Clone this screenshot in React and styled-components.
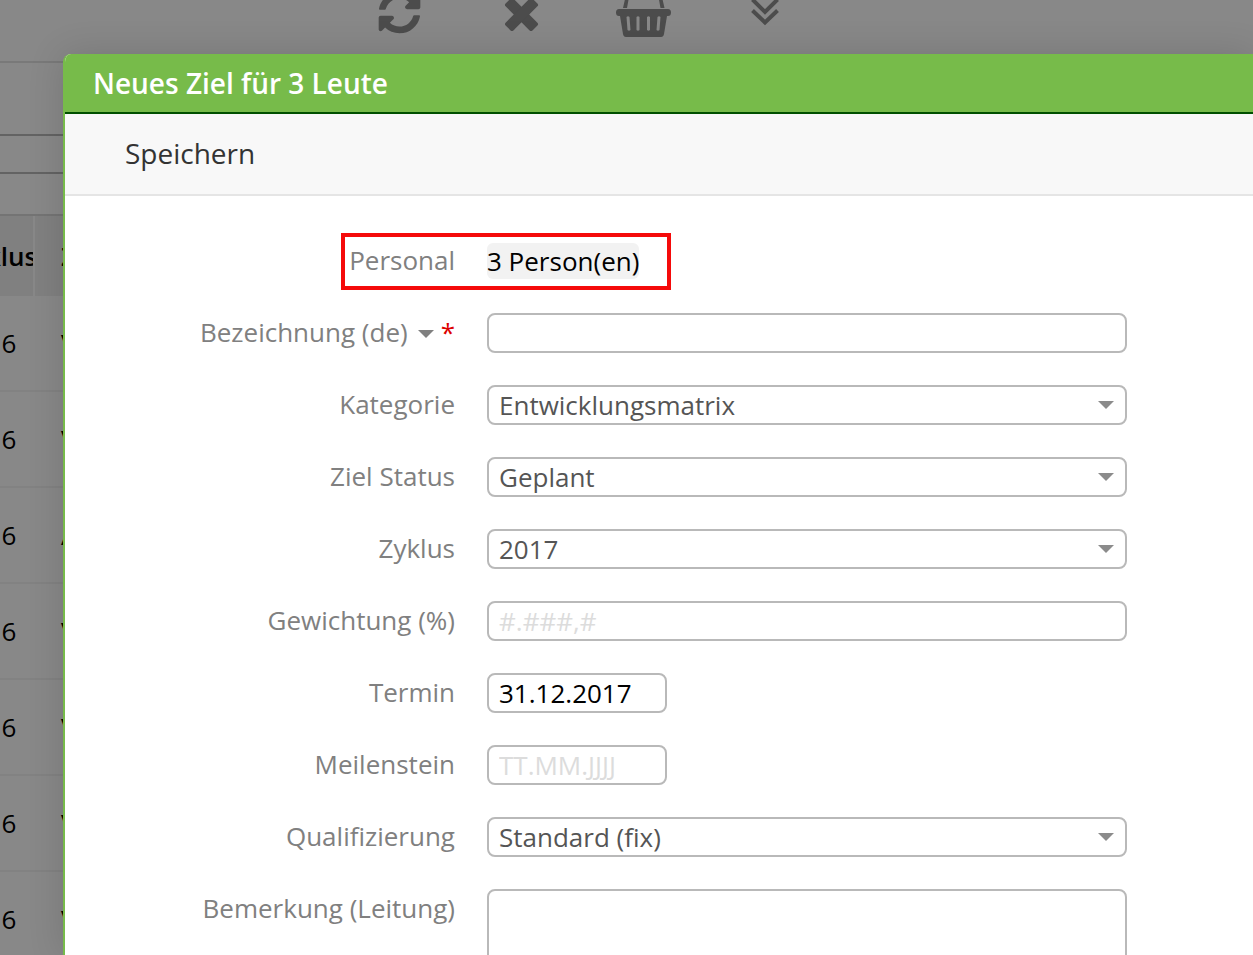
import React from "react";
import styled, { createGlobalStyle } from "styled-components";
import { FaSyncAlt } from "react-icons/fa";

const GlobalStyle = createGlobalStyle`
    * {
        box-sizing: border-box;
    }
    body {
        margin: 0;
        background: #888888;
        font-family: "Open Sans", "Noto Sans", sans-serif;
        font-size: 26px;
        color: #000000;
    }
    input,
    select,
    textarea,
    button {
        font-family: inherit;
        font-size: inherit;
    }
`;

const Page = styled.div`
    position: relative;
    height: 100vh;
    overflow: hidden;
`;

//page behind the dialog
const Toolbar = styled.div`
    display: flex;
    height: 63px;
    padding-left: 372px;
    gap: 66px;
    border-bottom: 2px solid #797979;
    overflow: hidden;
`;

const ToolButton = styled.button`
    display: block;
    width: 56px;
    height: 40px;
    padding: 0;
    border: 0;
    background: none;
    color: #4c4c4c;
    svg {
        display: block;
    }
`;

const Strip = styled.div`
    height: ${(props) => props.$height}px;
    border-bottom: 2px solid ${(props) => props.$line};
`;

const Table = styled.table`
    width: 100%;
    margin-left: -69px;
    border-collapse: separate;
    border-spacing: 0;
    table-layout: fixed;
    th,
    td {
        padding: 0 0 0 26px;
        text-align: left;
        white-space: nowrap;
        overflow: hidden;
    }
    th {
        height: 80px;
        background: #808080;
        font-weight: 600;
    }
    td {
        height: 96px;
        border-bottom: 2px solid #828282;
    }
    th:first-child {
        width: 104px;
        border-right: 2px solid #888888;
    }
`;

//dialog
const Dialog = styled.section`
    position: absolute;
    top: 54px;
    left: 63px;
    right: 0;
    bottom: 0;
    display: flex;
    flex-direction: column;
    overflow: hidden;
    background: #ffffff;
    border-left: 2px solid #77bb4a;
    border-radius: 8px 0 0 0;
    box-shadow: 0 0 36px rgba(0, 0, 0, 0.14);
`;

const Title = styled.h1`
    flex: none;
    height: 60px;
    margin: 0;
    padding-left: 28px;
    background: #77bb4a;
    border-bottom: 2px solid #005000;
    color: #ffffff;
    font-size: 28px;
    font-weight: 600;
    line-height: 58px;
`;

const Actions = styled.div`
    flex: none;
    display: flex;
    align-items: center;
    height: 82px;
    padding: 0 0 2px 60px;
    background: #f8f8f8;
    border-bottom: 2px solid #e5e5e5;
`;

const SaveButton = styled.button`
    padding: 0;
    border: 0;
    background: none;
    color: #333333;
    && {
        font-size: 28px;
    }
`;

const Form = styled.form`
    display: flex;
    flex-direction: column;
    gap: 32px;
    padding: 45px 126px 0 64px;
`;

const Row = styled.div`
    position: relative;
    display: grid;
    grid-template-columns: 326px 1fr;
    gap: 32px;
    min-height: 40px;
`;

const Label = styled.label`
    display: flex;
    justify-content: flex-end;
    align-items: center;
    height: 38px;
    color: #808080;
    white-space: nowrap;
`;

const LanguageButton = styled.button`
    display: flex;
    margin: 4px 7px 0 10px;
    padding: 0;
    border: 0;
    background: none;
    color: #808080;
`;

const Required = styled.span`
    color: #dd0000;
`;

const Persons = styled.output`
    justify-self: start;
    height: 36px;
    margin-top: 2px;
    background: #f2f2f2;
    border-radius: 6px;
    line-height: 36px;
`;

const Highlight = styled.div`
    position: absolute;
    top: -8px;
    left: 212px;
    width: 330px;
    height: 57px;
    border: 4px solid #f50a0a;
`;

const Input = styled.input`
    width: ${(props) => (props.$short ? "180px" : "100%")};
    height: 40px;
    padding: 0 10px;
    border: 2px solid #b9b9b9;
    border-radius: 8px;
    background: #ffffff;
    color: #000000;
    outline: none;
    &::placeholder {
        color: #dcdcdc;
    }
`;

const SelectBox = styled.div`
    display: grid;
    align-items: center;
    > * {
        grid-area: 1 / 1;
    }
    svg {
        justify-self: end;
        margin-right: 13px;
        color: #8b8b8b;
        pointer-events: none;
    }
`;

const Select = styled.select`
    appearance: none;
    width: 100%;
    height: 40px;
    padding: 0 40px 0 10px;
    border: 2px solid #b9b9b9;
    border-radius: 8px;
    background: #ffffff;
    color: #555555;
`;

const TextArea = styled.textarea`
    display: block;
    width: 100%;
    height: 160px;
    padding: 4px 10px;
    border: 2px solid #b9b9b9;
    border-radius: 8px;
    resize: none;
`;

const Caret = () => (
    <svg width="16" height="8" viewBox="0 0 16 8" fill="currentColor" aria-hidden="true">
        <path d="M0 0h16L8 8z" />
    </svg>
);

const Tools = [
    {
        title: "Aktualisieren",
        icon: (
            <svg width="56" height="40" viewBox="0 0 56 40">
                <FaSyncAlt x="6" y="-9" size={43} />
            </svg>
        ),
    },
    {
        title: "Löschen",
        icon: (
            <svg width="56" height="40" viewBox="0 0 56 40" fill="currentColor">
                <g transform="translate(27.5 14.5) rotate(45)">
                    <rect x="-19" y="-5.500" width="38" height="11" rx="2" />
                    <rect x="-5.500" y="-19" width="11" height="38" rx="2" />
                </g>
            </svg>
        ),
    },
    {
        title: "Warenkorb",
        icon: (
            <svg width="56" height="40" viewBox="0 0 56 40" fill="currentColor">
                <path d="M9.500-3h3.500L11 8H7zM42.500-3H46l2.500 11h-4z" />
                <path
                    fillRule="evenodd"
                    d="M3 9h49q3 0 3 3.500T52 16h-1l-3 18q-.5 3-3 3H10q-2.500 0-3-3L4 16H3q-3 0-3-3.500T3 9z M10.500 17l1 13q1.500 1.500 3 0l-1-13q-1.500-1.500-3 0z M20.500 17v13q1.500 1.500 3 0V17q-1.500-1.500-3 0z M31 17v13q1.500 1.500 3 0V17q-1.500-1.500-3 0z M41.500 17l-1 13q1.500 1.500 3 0l1-13q-1.500-1.500-3 0z"
                />
            </svg>
        ),
    },
    {
        title: "Mehr",
        icon: (
            <svg width="56" height="40" viewBox="0 0 56 40" stroke="currentColor" strokeWidth="4" fill="none">
                <path d="M14.500 -.5l12.500 12.500L39.500-.5M14.500 10.500L27 22.500l12.500-12" />
            </svg>
        ),
    },
];

const Goals = ["V", "V", "A", "V", "V", "V", "V"];

const SelectField = ({ id, value }) => (
    <SelectBox>
        <Select id={id} defaultValue={value}>
            <option>{value}</option>
        </Select>
        <Caret />
    </SelectBox>
);

const Fields = [
    { id: "kategorie", label: "Kategorie", control: <SelectField id="kategorie" value="Entwicklungsmatrix" /> },
    { id: "status", label: "Ziel Status", control: <SelectField id="status" value="Geplant" /> },
    { id: "zyklus", label: "Zyklus", control: <SelectField id="zyklus" value="2017" /> },
    { id: "gewichtung", label: "Gewichtung (%)", control: <Input id="gewichtung" placeholder="#.###,#" /> },
    { id: "termin", label: "Termin", control: <Input id="termin" $short defaultValue="31.12.2017" /> },
    { id: "meilenstein", label: "Meilenstein", control: <Input id="meilenstein" $short placeholder="TT.MM.JJJJ" /> },
    { id: "qualifizierung", label: "Qualifizierung", control: <SelectField id="qualifizierung" value="Standard (fix)" /> },
    { id: "bemerkung", label: "Bemerkung (Leitung)", control: <TextArea id="bemerkung" /> },
];

const GoalList = () => {
    return (
        <div>
            <Toolbar>
                {Tools.map((tool) => (
                    <ToolButton key={tool.title} aria-label={tool.title}>
                        {tool.icon}
                    </ToolButton>
                ))}
            </Toolbar>
            <Strip $height={73} $line="#636363" />
            <Strip $height={38} $line="#636363" />
            <Strip $height={42} $line="#747474" />
            <Table>
                <thead>
                    <tr>
                        <th>Zyklus</th>
                        <th>Z</th>
                    </tr>
                </thead>
                <tbody>
                    {Goals.map((goal, index) => (
                        <tr key={index}>
                            <td>2016</td>
                            <td>{goal}</td>
                        </tr>
                    ))}
                </tbody>
            </Table>
        </div>
    );
};

const GoalDialog = () => {
    return (
        <Dialog role="dialog" aria-labelledby="dialog-title">
            <Title id="dialog-title">Neues Ziel für 3 Leute</Title>
            <Actions>
                <SaveButton type="submit" form="goal">
                    Speichern
                </SaveButton>
            </Actions>
            <Form id="goal">
                <Row>
                    <Label htmlFor="personal">Personal</Label>
                    <Persons id="personal">3 Person(en)</Persons>
                    <Highlight />
                </Row>
                <Row>
                    <Label as="div">
                        <label htmlFor="bezeichnung">Bezeichnung (de)</label>
                        <LanguageButton type="button" aria-label="Sprache">
                            <Caret />
                        </LanguageButton>
                        <Required>*</Required>
                    </Label>
                    <Input id="bezeichnung" required />
                </Row>
                {Fields.map((field) => (
                    <Row key={field.id}>
                        <Label htmlFor={field.id}>{field.label}</Label>
                        {field.control}
                    </Row>
                ))}
            </Form>
        </Dialog>
    );
};

const App = () => {
    return (
        <Page>
            <GlobalStyle />
            <GoalList />
            <GoalDialog />
        </Page>
    );
};

export default App;
